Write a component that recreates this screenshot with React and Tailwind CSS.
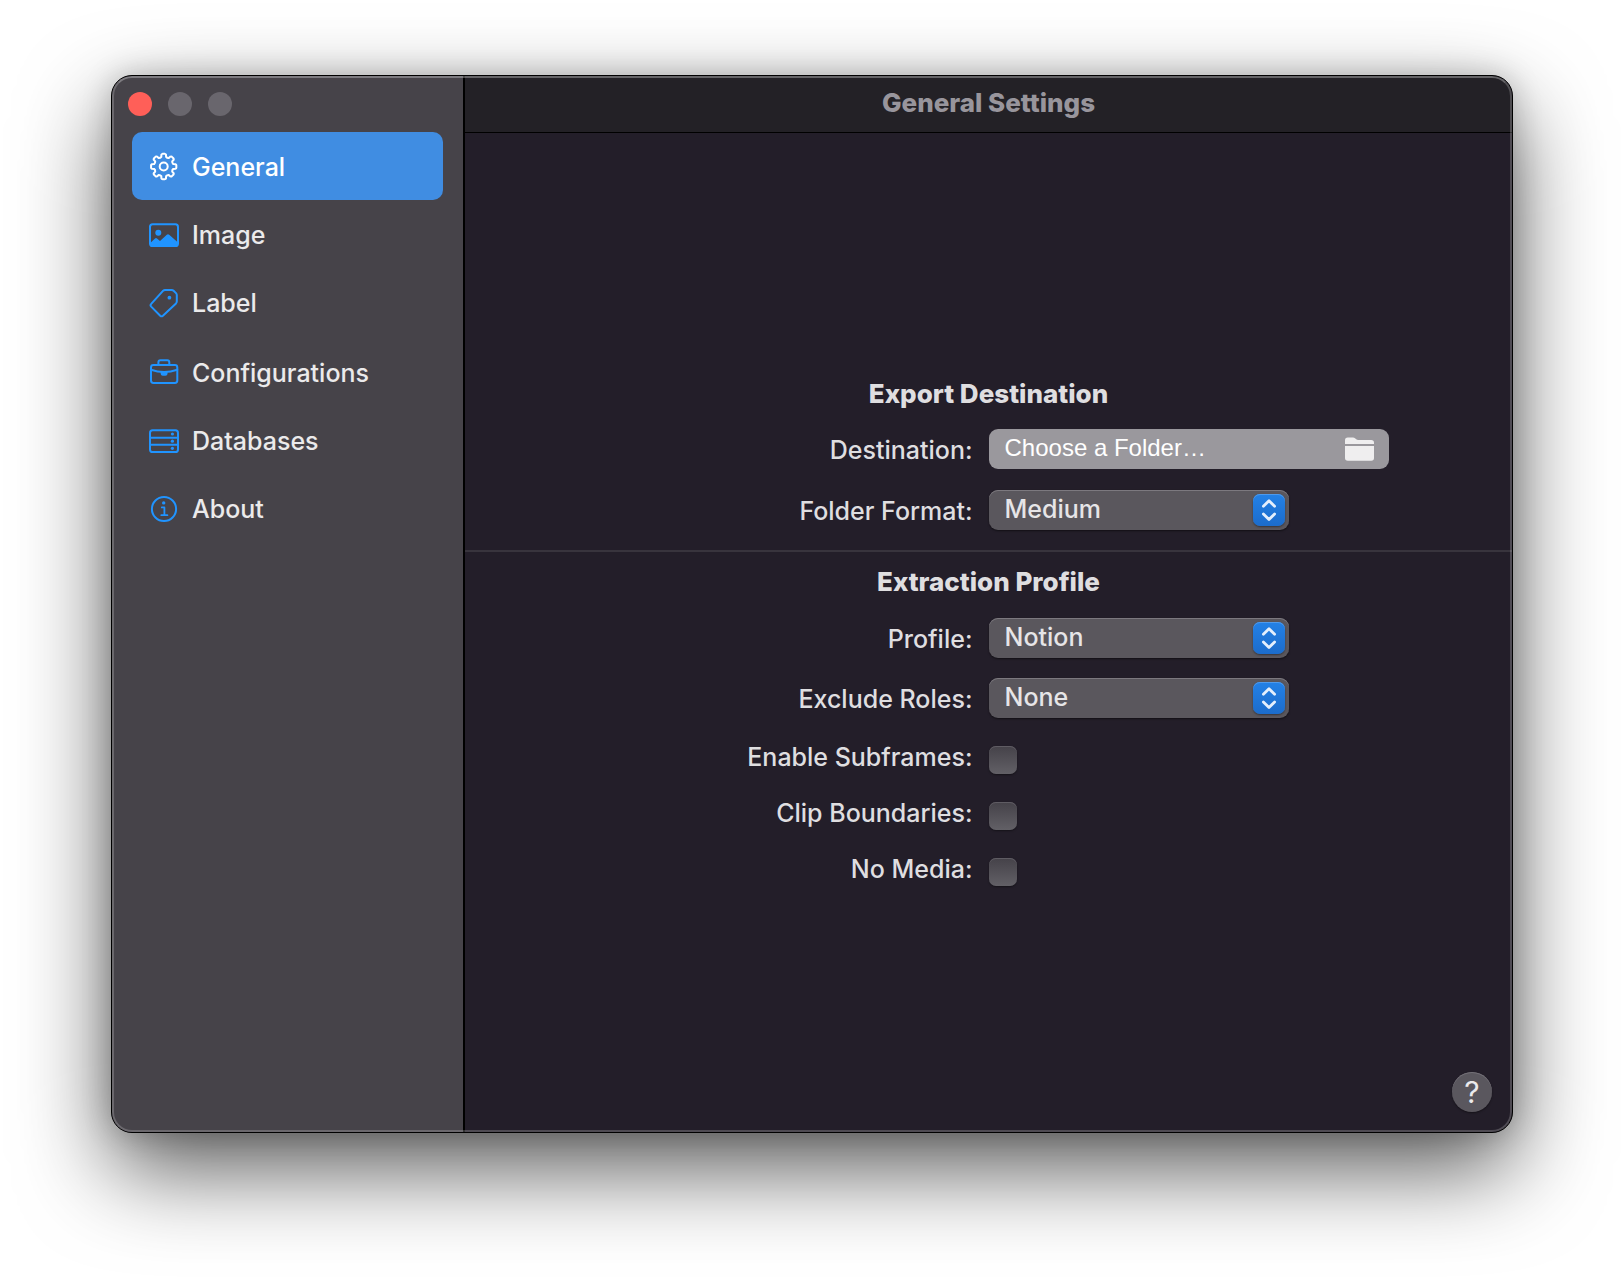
import { useState } from "react";

function gearPath(cx, cy) {
  const point = (radius, degrees) => {
    const a = (degrees * Math.PI) / 180;
    return `${(cx + radius * Math.sin(a)).toFixed(2)} ${(cy - radius * Math.cos(a)).toFixed(2)}`;
  };
  let d = "";
  for (let i = 0; i < 8; i += 1) {
    const t = i * 45;
    d += `${i === 0 ? "M" : "L"}${point(9.9, t - 14)} L${point(12, t - 11)} Q${point(12.7, t - 9)} ${point(12.7, t - 6)} L${point(12.7, t + 6)} Q${point(12.7, t + 9)} ${point(12, t + 11)} L${point(9.9, t + 14)} Q${point(9, t + 22.5)} ${point(9.9, t + 31)} `;
  }
  return `${d}Z`;
}

function Icon({ children }) {
  return (
    <svg
      viewBox="0 0 30 30"
      aria-hidden="true"
      className="size-[30px] shrink-0 overflow-visible"
      fill="none"
      stroke="currentColor"
      strokeWidth="2"
      strokeLinejoin="round"
      strokeLinecap="round"
    >
      {children}
    </svg>
  );
}

const GearIcon = () => (
  <Icon>
    <path d={gearPath(14.7, 15.5)} />
    <circle cx="14.7" cy="15.5" r="4" />
  </Icon>
);

const ImageIcon = () => (
  <Icon>
    <rect x="1" y="5.3" width="28" height="21.7" rx="2.6" />
    <circle cx="9.3" cy="13.7" r="3" fill="currentColor" stroke="none" />
    <path
      d="M1 24.2 L6 19.4 Q7 18.6 8 19.4 L11 22 L17.8 15.7 Q19 14.7 20.2 15.7 L29 23.6 V26 Q29 27.5 27 27.5 H3 Q1 27.5 1 26 Z"
      fill="currentColor"
      stroke="none"
    />
  </Icon>
);

const TagIcon = () => (
  <Icon>
    <path d="M14.2 3.7 Q15 2.9 16 2.9 H22.5 Q23.8 2.9 24.6 3.7 L27 6.1 Q27.8 6.9 27.8 8.1 V14.6 Q27.8 15.6 27 16.4 L13.9 28.7 Q12.5 29.9 11.2 28.7 L2.2 19.6 Q.9 18.2 2.2 16.9 Z" />
    <circle cx="20.4" cy="10.7" r="1.9" fill="currentColor" stroke="none" />
  </Icon>
);

const BriefcaseIcon = () => (
  <Icon>
    <rect x="2" y="8" width="26.3" height="18" rx="2.4" />
    <path d="M9.4 8 V5.3 Q9.4 3.3 11.4 3.3 H18.3 Q20.3 3.3 20.3 5.3 V8" />
    <path d="M2 12.8 Q15 17.4 28.3 12.8" />
    <path
      d="M11.6 15 H18.6 V15.8 Q18.6 18.7 16.4 18.7 H13.8 Q11.6 18.7 11.6 15.8 Z"
      fill="currentColor"
      stroke="none"
    />
  </Icon>
);

const DatabaseIcon = () => (
  <Icon>
    <rect x="1" y="5.3" width="28" height="21.7" rx="2.6" />
    <path d="M1 12.7 H29 M1 19.7 H29" />
    <g fill="currentColor" stroke="none">
      <circle cx="23.4" cy="9" r="1.6" />
      <circle cx="23.4" cy="16.2" r="1.6" />
      <circle cx="23.4" cy="23.3" r="1.6" />
    </g>
  </Icon>
);

const InfoIcon = () => (
  <Icon>
    <circle cx="15" cy="16" r="12.1" />
    <circle cx="14.7" cy="9.9" r="1.7" fill="currentColor" stroke="none" />
    <path d="M12.8 14.4 H15.4 V22.2 M12.3 22.2 H18.4" strokeWidth="1.8" />
  </Icon>
);

const groups = [
  [
    { name: "General", icon: GearIcon },
    { name: "Image", icon: ImageIcon },
    { name: "Label", icon: TagIcon },
  ],
  [
    { name: "Configurations", icon: BriefcaseIcon },
    { name: "Databases", icon: DatabaseIcon },
    { name: "About", icon: InfoIcon },
  ],
];

function Sidebar() {
  const [active, setActive] = useState("General");
  return (
    <aside className="w-[353px] shrink-0 border-r-2 border-black bg-[#464349]">
      <div className="flex gap-4 p-4">
        <button type="button" aria-label="Close" className="size-6 rounded-full bg-[#ff5f58]" />
        <button type="button" aria-label="Minimize" className="size-6 rounded-full bg-[#69666d]" />
        <button type="button" aria-label="Zoom" className="size-6 rounded-full bg-[#69666d]" />
      </div>
      <nav className="flex flex-col gap-0.5 px-5">
        {groups.map((items) => (
          <ul key={items[0].name}>
            {items.map(({ name, icon: ItemIcon }) => {
              const current = name === active;
              return (
                <li key={name}>
                  <button
                    type="button"
                    aria-current={current ? "page" : undefined}
                    onClick={() => setActive(name)}
                    className={
                      current
                        ? "flex h-[68px] w-full items-center gap-[13px] rounded-[10px] bg-[#408de2] pl-[17px] text-white"
                        : "flex h-[68px] w-full items-center gap-[13px] rounded-[10px] pl-[17px] text-[#2094ff]"
                    }
                  >
                    <ItemIcon />
                    <span className={current ? "pt-0.5 text-white" : "pt-0.5 text-[#ebeaeb]"}>{name}</span>
                  </button>
                </li>
              );
            })}
          </ul>
        ))}
      </nav>
    </aside>
  );
}

function PopUp({ id, label, options }) {
  return (
    <div className="grid grid-cols-2 items-center">
      <label htmlFor={id} className="pt-0.5 pr-4 text-right">
        {label}
      </label>
      <div className="relative w-[300px]">
        <select
          id={id}
          className="block h-10 w-full appearance-none rounded-[9px] bg-[#5a575d] pr-10 pb-0.5 pl-4 text-[#e6e5e7] shadow-[inset_0_1px_0_#7c797f,0_1px_2px_rgba(0,0,0,0.5)]"
        >
          {options.map((option) => (
            <option key={option}>{option}</option>
          ))}
        </select>
        <span className="pointer-events-none absolute top-1 right-1 size-8 rounded-[7px] bg-linear-to-b from-[#2381e6] to-[#1c6ccb] shadow-[inset_0_1px_0_#4f9aeb,0_1px_2px_rgba(0,0,0,0.4)]">
          <svg
            viewBox="0 0 32 32"
            aria-hidden="true"
            className="size-8"
            fill="none"
            stroke="#e4effc"
            strokeWidth="2.8"
            strokeLinecap="round"
            strokeLinejoin="round"
          >
            <path d="M10.4 12.3 L16 6.7 L21.6 12.3 M10.4 20 L16 25.6 L21.6 20" />
          </svg>
        </span>
      </div>
    </div>
  );
}

function CheckRow({ id, label }) {
  return (
    <div className="grid grid-cols-2 items-start">
      <label htmlFor={id} className="pr-4 text-right leading-[22px]">
        {label}
      </label>
      <input
        id={id}
        type="checkbox"
        className="size-7 appearance-none rounded-[7px] bg-linear-to-b from-[#454249] to-[#626066] shadow-[inset_0_1px_0_#5f5c63,0_1px_2px_rgba(0,0,0,0.4)] checked:from-[#2381e6] checked:to-[#1c6ccb]"
      />
    </div>
  );
}

function Settings() {
  return (
    <form className="text-[#dfdee0]">
      <section className="flex flex-col gap-[21px] pb-5">
        <h2 className="text-center text-[26px] leading-7 font-extrabold">Export Destination</h2>
        <div className="grid grid-cols-2 items-center">
          <label htmlFor="destination" className="pt-0.5 pr-4 text-right">
            Destination:
          </label>
          <button
            id="destination"
            type="button"
            className="flex h-10 w-[400px] items-center justify-between rounded-[9px] bg-[#9a989d] pr-[15px] pl-4 text-white"
          >
            <span className="pb-0.5 font-['Liberation_Sans',Arial,sans-serif] text-2xl font-normal">
              Choose a Folder…
            </span>
            <svg viewBox="0 0 29 24" aria-hidden="true" className="h-6 w-[29px]" fill="#efeeef">
              <path d="M0 7 V3.4 Q0 .6 2.8 .6 H8 Q9.2 .6 10 1.3 L11.2 2.3 Q12 3 13.2 3 H26.2 Q29 3 29 5.8 V7 Z" />
              <path d="M0 9 H29 V21 Q29 23.8 26.2 23.8 H2.8 Q0 23.8 0 21 Z" />
            </svg>
          </button>
        </div>
        <PopUp id="folder-format" label="Folder Format:" options={["Medium", "Small", "Large"]} />
      </section>
      <hr className="border-t-2 border-[#38343d]" />
      <section className="flex flex-col gap-7 pt-4">
        <div className="flex flex-col gap-5">
          <h2 className="pb-0.5 text-center text-[26px] leading-7 font-extrabold">Extraction Profile</h2>
          <PopUp id="profile" label="Profile:" options={["Notion", "Default"]} />
          <PopUp id="exclude-roles" label="Exclude Roles:" options={["None", "All"]} />
        </div>
        <CheckRow id="subframes" label="Enable Subframes:" />
        <CheckRow id="clip" label="Clip Boundaries:" />
        <CheckRow id="no-media" label="No Media:" />
      </section>
    </form>
  );
}

export default function App() {
  return (
    <div className="flex min-h-screen bg-white px-[111px] pt-[75px] pb-[147px] font-[Inter,sans-serif] text-[25px] leading-8 font-medium">
      <div className="relative flex flex-1 overflow-hidden rounded-[21px] border border-black bg-[#231e29] shadow-[0_36px_90px_rgba(0,0,0,0.65),0_0_30px_rgba(0,0,0,0.2)]">
        <Sidebar />
        <div className="flex min-w-0 flex-1 flex-col">
          <header className="flex h-[57px] items-center justify-center border-b border-black bg-[#232126] pb-0.5">
            <h1 className="text-[26px] font-extrabold text-[#98959c]">General Settings</h1>
          </header>
          <main className="grid flex-1 grid-rows-[1fr_auto_1fr]">
            <div />
            <Settings />
            <div className="flex items-end justify-end p-5">
              <button
                type="button"
                aria-label="Help"
                className="size-10 rounded-full bg-[#5a575e] text-[30px] font-normal text-[#ebeaec] shadow-[inset_0_1px_0_#737077,0_1px_2px_rgba(0,0,0,0.4)]"
              >
                ?
              </button>
            </div>
          </main>
        </div>
        <div className="pointer-events-none absolute inset-0 rounded-[20px] border-2 border-white/20 border-t-white/30" />
      </div>
    </div>
  );
}
